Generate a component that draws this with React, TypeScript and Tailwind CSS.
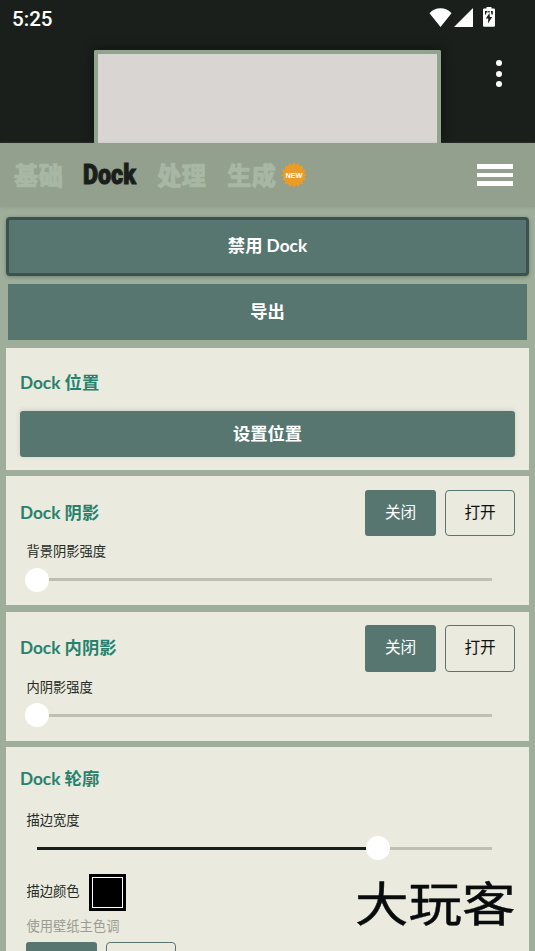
import type { ReactNode } from "react";

function StatusBar() {
  return (
    <div className="flex h-[50px] items-start justify-between pl-3 pr-[40px]">
      <span className="mt-[6px] font-['Roboto','Liberation_Sans',sans-serif] text-[20.6px] font-medium leading-[26px] text-white">5:25</span>
      <div className="mt-[7px] flex items-start text-white">
        <svg className="mt-px h-[19px] w-[23px]" viewBox="0 0 23 19" fill="currentColor">
          <path d="M.5 5.2C3.3 2 7.1.3 11.5.3s8.2 1.700 11 4.900L11.5 19z" />
        </svg>
        <svg className="ml-[2px] mt-px h-[19px] w-[19px]" viewBox="0 0 19 19" fill="currentColor">
          <path d="M19 0v19H0z" />
        </svg>
        <svg className="ml-[10px] h-[20px] w-[12px]" viewBox="0 0 12 20">
          <path fill="currentColor" d="M3.500 0h5v1.500h2.300a1.200 1.200 0 0 1 1.200 1.200v15.8a1.300 1.300 0 0 1-1.300 1.300H1.300A1.300 1.300 0 0 1 0 18.500V2.700A1.200 1.200 0 0 1 1.200 1.500h2.300z" />
          <path fill="#1c1f1c" d="M6.500 6 2.800 11.500H5.300L5 16.500 9.200 10H6.800zM2 4h2.500v1.500H3.200v2H2zM5.200 4h1.500v1.500H5.200zM7.800 4h2v3.500H8.500z" />
        </svg>
      </div>
    </div>
  );
}

function Preview() {
  return (
    <div className="flex h-[93px] justify-end">
      <div className="h-full w-[347px] rounded-t-[2px] border-x-4 border-t-4 border-[#92a38f] bg-[#d9d5d2] shadow-[0_0_12px_#0b120d]" />
      <div className="flex w-[94px] flex-col items-center gap-[4.500px] pl-[21px] pt-[10px]">
        <i className="size-[6px] rounded-full bg-white" />
        <i className="size-[6px] rounded-full bg-white" />
        <i className="size-[6px] rounded-full bg-white" />
      </div>
    </div>
  );
}

function NewBadge() {
  const points = Array.from({ length: 32 }, (_, i) => {
    const r = i % 2 ? 10.2 : 13;
    const a = (i * Math.PI) / 16;
    return `${13 + r * Math.sin(a)},${13 - r * Math.cos(a)}`;
  }).join(" ");
  return (
    <svg className="ml-[4px] size-[26px]" viewBox="0 0 26 26">
      <polygon points={points} fill="#eb9c26" />
      <text x="13" y="15.800" textAnchor="middle" textLength="17" lengthAdjust="spacingAndGlyphs" fill="#fff" fontFamily="Liberation Sans, sans-serif" fontWeight="700" fontSize="8">NEW</text>
    </svg>
  );
}

function TabLabel({ children }: { children: ReactNode }) {
  return (
    <span className="w-[50px] whitespace-nowrap font-['Noto_Sans_CJK_SC',sans-serif] text-[24.5px] font-black leading-[32px] text-[#a7b7a4] [-webkit-text-stroke:0.6px_#a7b7a4]">{children}</span>
  );
}

function Header() {
  return (
    <header className="relative flex h-[64px] items-center bg-[#92a08d] pl-[14px] pr-[22px] shadow-[0_1px_3px_#8999868c]">
      <TabLabel>基础</TabLabel>
      <span className="ml-[19px] w-[55px] whitespace-nowrap">
        <span className="inline-block origin-left scale-x-[0.86] font-['Roboto','Liberation_Sans',sans-serif] text-[27px] font-black leading-[32px] text-[#1b1f1b] [-webkit-text-stroke:1px_#1b1f1b]">Dock</span>
      </span>
      <span className="ml-[19px] flex"><TabLabel>处理</TabLabel></span>
      <span className="ml-[20px] flex"><TabLabel>生成</TabLabel></span>
      <NewBadge />
      <div className="ml-auto flex w-[36px] flex-col gap-[4px]">
        <i className="h-[4.500px] bg-white" />
        <i className="h-[4.500px] bg-white" />
        <i className="h-[4.500px] bg-white" />
      </div>
    </header>
  );
}

function Title({ children }: { children: ReactNode }) {
  return <h2 className="whitespace-nowrap text-[17.3px] font-bold leading-[26px] text-[#26826f]">{children}</h2>;
}

function Toggle({ labels = [] }: { labels?: string[] }) {
  return (
    <div className="flex gap-[9px] text-[15.7px]">
      <button className="h-[46.500px] w-[71px] rounded-[3px] bg-[#577670] text-white">{labels[0]}</button>
      <button className="h-[46.500px] w-[70px] rounded-[4px] border-[1.500px] border-[#577670] text-[#111]">{labels[1]}</button>
    </div>
  );
}

function Slider({ value }: { value: number }) {
  return (
    <div className="relative ml-[30.400px] mr-[37px] flex h-6 items-center">
      <div className="h-[3px] w-full bg-[#bfc0b5]">
        <div className="h-full bg-[#1b1f1b]" style={{ width: `${value}%` }} />
      </div>
      <i className="absolute top-0 size-6 -translate-x-1/2 rounded-full bg-white" style={{ left: `${value}%` }} />
    </div>
  );
}

function ShadowCard({ title, label }: { title: string; label: string }) {
  return (
    <section className="h-[129px] bg-[#eaeade] pt-[13.500px]">
      <div className="flex items-center justify-between pl-[13.500px] pr-[13.500px]">
        <Title>{title}</Title>
        <Toggle labels={["关闭", "打开"]} />
      </div>
      <p className="ml-5 mt-[5px] text-[13.300px] leading-5 text-[#252b25]">{label}</p>
      <div className="mt-[6.500px]"><Slider value={0} /></div>
    </section>
  );
}

export default function App() {
  return (
    <div className="relative h-[951px] w-[535px] overflow-hidden bg-[#9eae9a] font-['Lato','Noto_Sans_CJK_SC',sans-serif]">
      <div className="bg-[#1b1f1b]">
        <StatusBar />
        <Preview />
      </div>
      <Header />
      <main className="flex flex-col pl-[6.400px] pr-[6.400px] pt-[9.500px]">
        <button className="h-[59px] rounded-[4px] border-[3px] border-[#3c5252] bg-[#577670] text-[17.300px] font-bold text-white shadow-[0_1px_4px_#71806f]">禁用 Dock</button>
        <button className="mx-[1.500px] mt-[8px] h-[56px] bg-[#577670] text-[17.300px] font-bold text-white">导出</button>
        <section className="mt-[8px] h-[122px] bg-[#eaeade] px-[13.500px] pt-[22px]">
          <Title>Dock 位置</Title>
          <button className="mt-[15px] h-[46px] w-full rounded-[3px] bg-[#577670] text-[17.300px] font-bold text-white shadow-[0_-1px_5px_#ced0c5]">设置位置</button>
        </section>
        <div className="mt-[6.500px]"><ShadowCard title="Dock 阴影" label="背景阴影强度" /></div>
        <div className="mt-[6.500px]"><ShadowCard title="Dock 内阴影" label="内阴影强度" /></div>
        <section className="mt-[6.500px] h-[220px] bg-[#eaeade] pt-[19px]">
          <div className="pl-[13.500px]"><Title>Dock 轮廓</Title></div>
          <p className="ml-5 mt-[18px] text-[13.300px] leading-5 text-[#252b25]">描边宽度</p>
          <div className="mt-[6px]"><Slider value={75} /></div>
          <div className="ml-5 mt-[13.500px] flex items-center gap-[9px]">
            <span className="-mt-[3px] text-[13.300px] leading-5 text-[#252b25]">描边颜色</span>
            <div className="h-[37px] w-[37px] border-[3px] border-black bg-white p-px">
              <div className="h-full w-full bg-black" />
            </div>
          </div>
          <p className="ml-5 mt-[5px] text-[13.300px] leading-5 text-[#9b9d94]">使用壁纸主色调</p>
          <div className="ml-[19.500px] mt-[6.500px]"><Toggle /></div>
        </section>
      </main>
      <svg className="absolute left-[355px] top-[861px] h-[80px] w-[164px]" viewBox="0 0 164 80">
        <text x="0" y="0" transform="translate(0 60) scale(1 .87)" fontFamily="Noto Sans CJK SC, sans-serif" fontSize="53.500" fill="#080c0c" stroke="#080c0c" strokeWidth=".5" strokeLinejoin="round">大玩客</text>
      </svg>
    </div>
  );
}
